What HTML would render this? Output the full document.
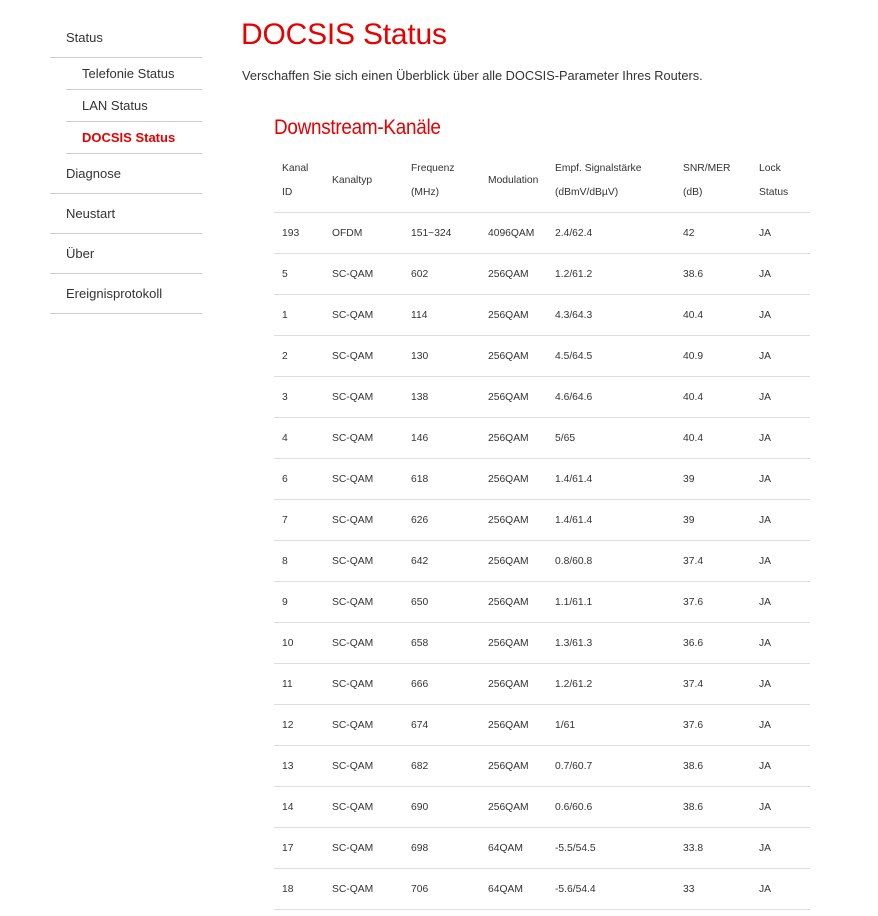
<!DOCTYPE html>
<html><head><meta charset="utf-8"><style>
body{margin:0;background:#fff;font-family:"Liberation Sans",Arial,sans-serif;color:#333;width:878px;height:916px;overflow:hidden;position:relative}
.it{position:absolute;font-size:13px;color:#333;white-space:nowrap}
.ln{position:absolute;height:1px;background:#ccc}
h1{position:absolute;left:241px;top:18px;margin:0;font-weight:normal;color:#e60000;font-size:30px;letter-spacing:-0.2px}
.desc{position:absolute;left:242px;top:68px;font-size:12.8px;color:#333}
h2{position:absolute;left:274px;top:116px;margin:0;font-weight:normal;color:#e60000;font-size:21px;transform:scaleX(0.9);transform-origin:left;letter-spacing:-0.3px}
table{position:absolute;left:274px;top:150px;border-collapse:collapse;font-size:10.3px;color:#333}
td,th{padding:0 0 0 8px;text-align:left;font-weight:normal;border-bottom:1px solid #ddd;vertical-align:middle;white-space:nowrap}
thead th{height:62px;line-height:24px}
tbody td{height:40px}
</style></head><body>
<div class="it" style="left:66px;top:30px">Status</div>
<div class="ln" style="left:50px;top:57px;width:152px"></div>
<div class="it" style="left:82px;top:66px">Telefonie Status</div>
<div class="ln" style="left:66px;top:89px;width:136px"></div>
<div class="it" style="left:82px;top:98px">LAN Status</div>
<div class="ln" style="left:66px;top:121px;width:136px"></div>
<div class="it" style="left:82px;top:130px;color:#e60000;font-weight:bold">DOCSIS Status</div>
<div class="ln" style="left:66px;top:153px;width:136px"></div>
<div class="it" style="left:66px;top:166px">Diagnose</div>
<div class="ln" style="left:50px;top:193px;width:152px"></div>
<div class="it" style="left:66px;top:206px">Neustart</div>
<div class="ln" style="left:50px;top:233px;width:152px"></div>
<div class="it" style="left:66px;top:246px">Über</div>
<div class="ln" style="left:50px;top:273px;width:152px"></div>
<div class="it" style="left:66px;top:286px">Ereignisprotokoll</div>
<div class="ln" style="left:50px;top:313px;width:152px"></div>

<h1>DOCSIS Status</h1>
<div class="desc">Verschaffen Sie sich einen Überblick über alle DOCSIS-Parameter Ihres Routers.</div>
<h2>Downstream-Kanäle</h2>
<table>
<thead><tr><th style="width:42px;min-width:42px;max-width:42px">Kanal<br>ID</th><th style="width:71px;min-width:71px;max-width:71px">Kanaltyp</th><th style="width:69px;min-width:69px;max-width:69px">Frequenz<br>(MHz)</th><th style="width:59px;min-width:59px;max-width:59px">Modulation</th><th style="width:120px;min-width:120px;max-width:120px">Empf. Signalstärke<br>(dBmV/dBµV)</th><th style="width:68px;min-width:68px;max-width:68px">SNR/MER<br>(dB)</th><th style="width:51px;min-width:51px;max-width:51px">Lock<br>Status</th></tr></thead>
<tbody>
<tr><td>193</td><td>OFDM</td><td>151~324</td><td>4096QAM</td><td>2.4/62.4</td><td>42</td><td>JA</td></tr>
<tr><td>5</td><td>SC-QAM</td><td>602</td><td>256QAM</td><td>1.2/61.2</td><td>38.6</td><td>JA</td></tr>
<tr><td>1</td><td>SC-QAM</td><td>114</td><td>256QAM</td><td>4.3/64.3</td><td>40.4</td><td>JA</td></tr>
<tr><td>2</td><td>SC-QAM</td><td>130</td><td>256QAM</td><td>4.5/64.5</td><td>40.9</td><td>JA</td></tr>
<tr><td>3</td><td>SC-QAM</td><td>138</td><td>256QAM</td><td>4.6/64.6</td><td>40.4</td><td>JA</td></tr>
<tr><td>4</td><td>SC-QAM</td><td>146</td><td>256QAM</td><td>5/65</td><td>40.4</td><td>JA</td></tr>
<tr><td>6</td><td>SC-QAM</td><td>618</td><td>256QAM</td><td>1.4/61.4</td><td>39</td><td>JA</td></tr>
<tr><td>7</td><td>SC-QAM</td><td>626</td><td>256QAM</td><td>1.4/61.4</td><td>39</td><td>JA</td></tr>
<tr><td>8</td><td>SC-QAM</td><td>642</td><td>256QAM</td><td>0.8/60.8</td><td>37.4</td><td>JA</td></tr>
<tr><td>9</td><td>SC-QAM</td><td>650</td><td>256QAM</td><td>1.1/61.1</td><td>37.6</td><td>JA</td></tr>
<tr><td>10</td><td>SC-QAM</td><td>658</td><td>256QAM</td><td>1.3/61.3</td><td>36.6</td><td>JA</td></tr>
<tr><td>11</td><td>SC-QAM</td><td>666</td><td>256QAM</td><td>1.2/61.2</td><td>37.4</td><td>JA</td></tr>
<tr><td>12</td><td>SC-QAM</td><td>674</td><td>256QAM</td><td>1/61</td><td>37.6</td><td>JA</td></tr>
<tr><td>13</td><td>SC-QAM</td><td>682</td><td>256QAM</td><td>0.7/60.7</td><td>38.6</td><td>JA</td></tr>
<tr><td>14</td><td>SC-QAM</td><td>690</td><td>256QAM</td><td>0.6/60.6</td><td>38.6</td><td>JA</td></tr>
<tr><td>17</td><td>SC-QAM</td><td>698</td><td>64QAM</td><td>-5.5/54.5</td><td>33.8</td><td>JA</td></tr>
<tr><td>18</td><td>SC-QAM</td><td>706</td><td>64QAM</td><td>-5.6/54.4</td><td>33</td><td>JA</td></tr>
</tbody></table>
</body></html>
